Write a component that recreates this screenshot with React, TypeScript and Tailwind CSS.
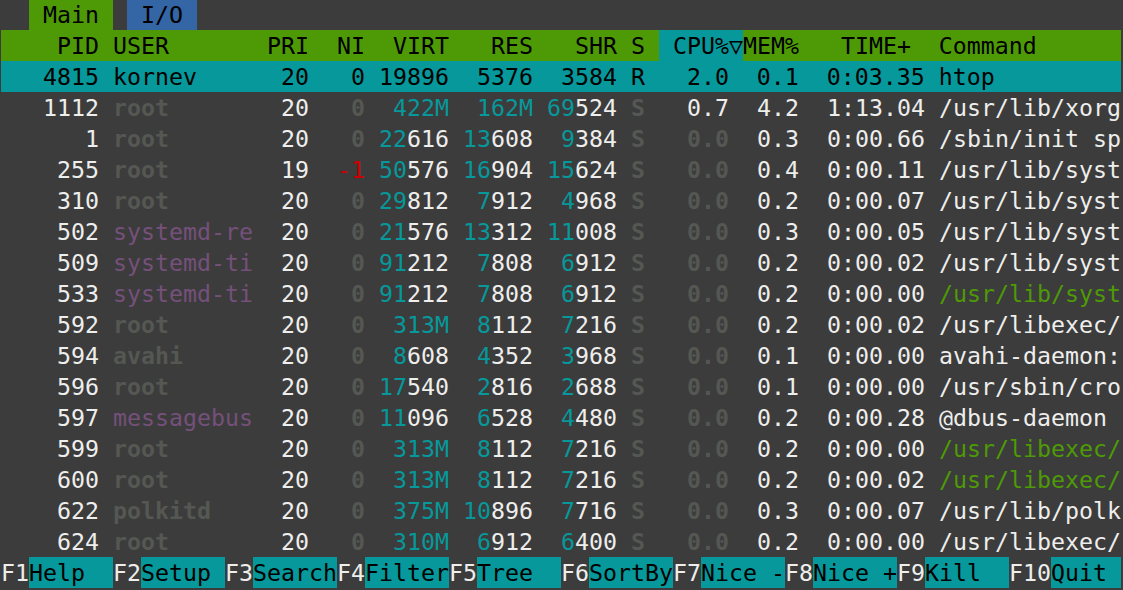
type Proc = {
  pid: string;
  user: string;
  userCls: string;
  pri: string;
  ni: string;
  virt: string;
  res: string;
  shr: string;
  cpu: string;
  mem: string;
  time: string;
  cmd: string;
  thread?: boolean;
};

const WHITE = "text-[#eeeeec]";
const GRAY = "text-[#555753] font-bold";
const CYAN = "text-[#06989a]";
const PURPLE = "text-[#75507b]";
const RED = "text-[#cc0000]";
const GREEN = "text-[#4e9a06]";

const procs: Proc[] = [
  { pid: "1112", user: "root", userCls: GRAY, pri: "20", ni: "0", virt: "422M", res: "162M", shr: "69524", cpu: "0.7", mem: "4.2", time: "1:13.04", cmd: "/usr/lib/xorg" },
  { pid: "1", user: "root", userCls: GRAY, pri: "20", ni: "0", virt: "22616", res: "13608", shr: "9384", cpu: "0.0", mem: "0.3", time: "0:00.66", cmd: "/sbin/init sp" },
  { pid: "255", user: "root", userCls: GRAY, pri: "19", ni: "-1", virt: "50576", res: "16904", shr: "15624", cpu: "0.0", mem: "0.4", time: "0:00.11", cmd: "/usr/lib/syst" },
  { pid: "310", user: "root", userCls: GRAY, pri: "20", ni: "0", virt: "29812", res: "7912", shr: "4968", cpu: "0.0", mem: "0.2", time: "0:00.07", cmd: "/usr/lib/syst" },
  { pid: "502", user: "systemd-re", userCls: PURPLE, pri: "20", ni: "0", virt: "21576", res: "13312", shr: "11008", cpu: "0.0", mem: "0.3", time: "0:00.05", cmd: "/usr/lib/syst" },
  { pid: "509", user: "systemd-ti", userCls: PURPLE, pri: "20", ni: "0", virt: "91212", res: "7808", shr: "6912", cpu: "0.0", mem: "0.2", time: "0:00.02", cmd: "/usr/lib/syst" },
  { pid: "533", user: "systemd-ti", userCls: PURPLE, pri: "20", ni: "0", virt: "91212", res: "7808", shr: "6912", cpu: "0.0", mem: "0.2", time: "0:00.00", cmd: "/usr/lib/syst", thread: true },
  { pid: "592", user: "root", userCls: GRAY, pri: "20", ni: "0", virt: "313M", res: "8112", shr: "7216", cpu: "0.0", mem: "0.2", time: "0:00.02", cmd: "/usr/libexec/" },
  { pid: "594", user: "avahi", userCls: GRAY, pri: "20", ni: "0", virt: "8608", res: "4352", shr: "3968", cpu: "0.0", mem: "0.1", time: "0:00.00", cmd: "avahi-daemon:" },
  { pid: "596", user: "root", userCls: GRAY, pri: "20", ni: "0", virt: "17540", res: "2816", shr: "2688", cpu: "0.0", mem: "0.1", time: "0:00.00", cmd: "/usr/sbin/cro" },
  { pid: "597", user: "messagebus", userCls: PURPLE, pri: "20", ni: "0", virt: "11096", res: "6528", shr: "4480", cpu: "0.0", mem: "0.2", time: "0:00.28", cmd: "@dbus-daemon" },
  { pid: "599", user: "root", userCls: GRAY, pri: "20", ni: "0", virt: "313M", res: "8112", shr: "7216", cpu: "0.0", mem: "0.2", time: "0:00.00", cmd: "/usr/libexec/", thread: true },
  { pid: "600", user: "root", userCls: GRAY, pri: "20", ni: "0", virt: "313M", res: "8112", shr: "7216", cpu: "0.0", mem: "0.2", time: "0:00.02", cmd: "/usr/libexec/", thread: true },
  { pid: "622", user: "polkitd", userCls: GRAY, pri: "20", ni: "0", virt: "375M", res: "10896", shr: "7716", cpu: "0.0", mem: "0.3", time: "0:00.07", cmd: "/usr/lib/polk" },
  { pid: "624", user: "root", userCls: GRAY, pri: "20", ni: "0", virt: "310M", res: "6912", shr: "6400", cpu: "0.0", mem: "0.2", time: "0:00.00", cmd: "/usr/libexec/" },
];

const fkeys = [
  ["F1", "Help  "],
  ["F2", "Setup "],
  ["F3", "Search"],
  ["F4", "Filter"],
  ["F5", "Tree  "],
  ["F6", "SortBy"],
  ["F7", "Nice -"],
  ["F8", "Nice +"],
  ["F9", "Kill  "],
  ["F10", "Quit "],
];

const lpad = (s: string, n: number) => s.padStart(n, " ");
const rpad = (s: string, n: number) => s.padEnd(n, " ");

// memory columns: megabytes in cyan, the rest in white
function MemCell({ v }: { v: string }) {
  const pad = " ".repeat(6 - v.length);
  if (v.endsWith("M")) {
    return (
      <>
        {pad}
        <span className={CYAN}>{v}</span>
      </>
    );
  }
  const hi = v.length > 3 ? v.slice(0, v.length - 3) : "";
  const lo = v.slice(hi.length);
  return (
    <>
      {pad}
      <span className={CYAN}>{hi}</span>
      <span className={WHITE}>{lo}</span>
    </>
  );
}

function ProcRow({ p }: { p: Proc }) {
  return (
    <div className="h-[31px] leading-[31px] whitespace-pre">
      <span className={WHITE}>{lpad(p.pid, 7)}</span>{" "}
      <span className={p.userCls}>{rpad(p.user, 10)}</span>{" "}
      <span className={WHITE}>{lpad(p.pri, 3)}</span>
      {" ".repeat(4 - p.ni.length)}
      <span className={p.ni === "0" ? GRAY : RED}>{p.ni}</span>
      <MemCell v={p.virt} />
      <MemCell v={p.res} />
      <MemCell v={p.shr} />{" "}
      <span className={GRAY}>S</span>{" "}
      <span className={p.cpu === "0.0" ? GRAY : WHITE}>{lpad(p.cpu, 5)}</span>{" "}
      <span className={WHITE}>{lpad(p.mem, 4)}</span>{" "}
      <span className={WHITE}>{lpad(p.time, 8)}</span>{" "}
      <span className={p.thread ? GREEN : WHITE}>{p.cmd}</span>
    </div>
  );
}

export default function App() {
  const selected =
    lpad("4815", 7) + " " + rpad("kornev", 10) + " " + lpad("20", 3) + lpad("0", 4) +
    lpad("19896", 6) + lpad("5376", 6) + lpad("3584", 6) + " R " + lpad("2.0", 5) + " " +
    lpad("0.1", 4) + " " + lpad("0:03.35", 8) + " " + rpad("htop", 13);

  return (
    <div className="w-[1123px] h-[590px] overflow-hidden bg-[#3c3c3c] pl-px font-['DejaVu_Sans_Mono',monospace] text-[23.25px] text-[#eeeeec]">
      {/* tabs */}
      <div className="h-[30px] leading-[30px] whitespace-pre text-black">
        {"  "}
        <span className="inline-block bg-[#4e9a06]">{" Main "}</span>
        {" "}
        <span className="inline-block bg-[#3465a4]">{" I/O "}</span>
      </div>

      {/* column header */}
      <div className="w-[1120px] h-[31px] leading-[31px] whitespace-pre bg-[#4e9a06] text-black">
        {"    PID USER       PRI  NI  VIRT   RES   SHR S "}
        <span className="inline-block bg-[#06989a]">{" CPU%▽"}</span>
        {"MEM%   TIME+  Command"}
      </div>

      {/* selected process */}
      <div className="w-[1120px] h-[31px] leading-[31px] whitespace-pre bg-[#06989a] text-black">{selected}</div>

      {procs.map((p) => (
        <ProcRow key={p.pid} p={p} />
      ))}

      {/* function keys */}
      <div className="w-[1120px] h-[31px] leading-[31px] whitespace-pre flex">
        {fkeys.map(([k, label]) => (
          <span key={k} className="flex">
            <span className="text-[#eeeeec]">{k}</span>
            <span className="bg-[#06989a] text-black">{label}</span>
          </span>
        ))}
      </div>
    </div>
  );
}
